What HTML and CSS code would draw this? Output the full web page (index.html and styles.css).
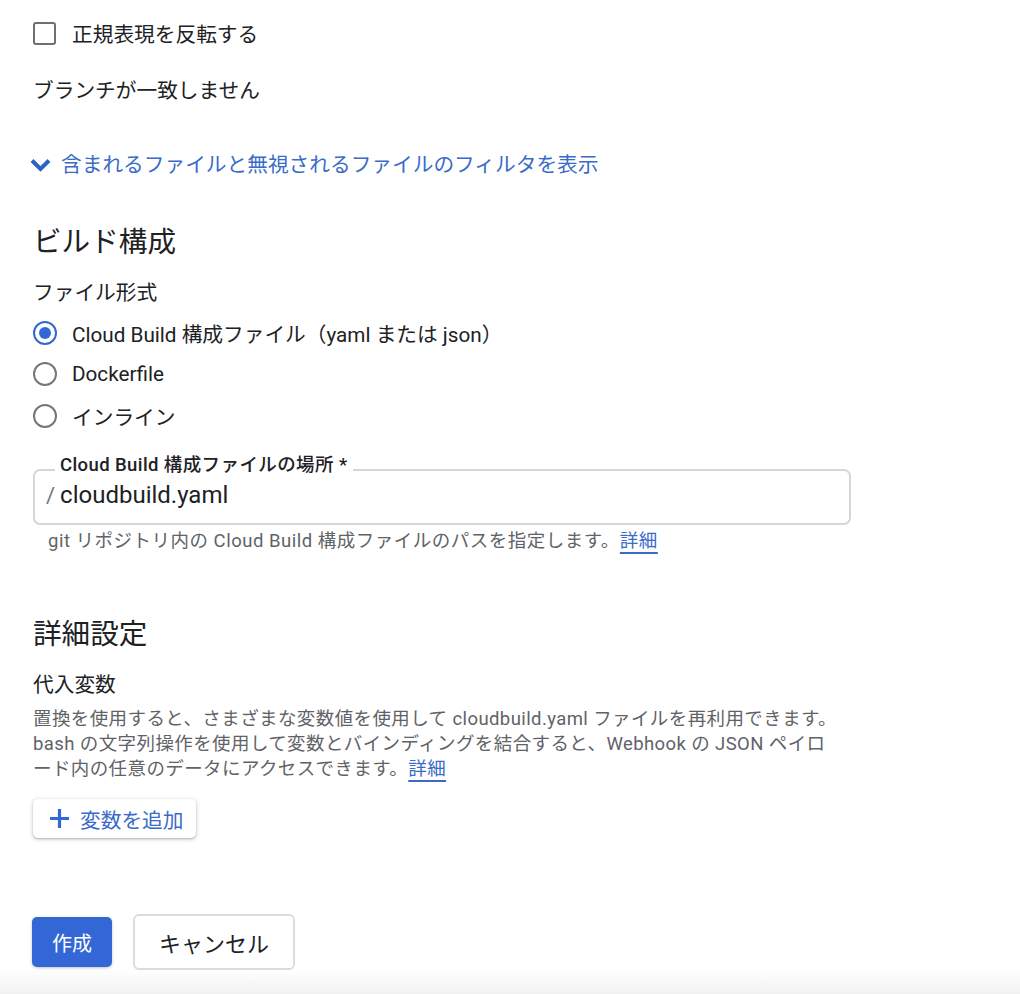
FILE: index.html
```html
<!DOCTYPE html>
<html lang="ja">
<head>
<meta charset="utf-8">
<title>トリガーの作成</title>
<link rel="stylesheet" href="styles.css">
</head>
<body>
<div class="form">
  <div class="check-row">
    <span class="checkbox"></span>
    <span>正規表現を反転する</span>
  </div>
  <div class="plain">ブランチが一致しません</div>
  <div class="expander">
    <svg class="chevron" width="21" height="14" viewBox="0 0 21 14"><polyline points="2,2.5 10.5,11 19,2.5" fill="none" stroke="#2f62c0" stroke-width="4"/></svg>
    <span>含まれるファイルと無視されるファイルのフィルタを表示</span>
  </div>

  <h2 class="section">ビルド構成</h2>
  <div class="field-title">ファイル形式</div>
  <div class="radios">
    <div class="radio-row"><span class="radio checked"></span><span>Cloud Build 構成ファイル（yaml または json）</span></div>
    <div class="radio-row"><span class="radio"></span><span>Dockerfile</span></div>
    <div class="radio-row"><span class="radio"></span><span>インライン</span></div>
  </div>

  <div class="outlined">
    <span class="float-label">Cloud Build 構成ファイルの場所 *</span>
    <span class="prefix">/</span>
    <span class="value">cloudbuild.yaml</span>
  </div>
  <div class="help">git リポジトリ内の Cloud Build 構成ファイルのパスを指定します。<a class="more" href="#">詳細</a></div>

  <h2 class="section section-adv">詳細設定</h2>
  <div class="subtitle">代入変数</div>
  <p class="desc">置換を使用すると、さまざまな変数値を使用して cloudbuild.yaml ファイルを再利用できます。bash の文字列操作を使用して変数とバインディングを結合すると、Webhook の JSON ペイロード内の任意のデータにアクセスできます。<a class="more" href="#">詳細</a></p>
  <button class="add-btn">
    <svg width="19" height="19" viewBox="0 0 19 19"><path d="M9.5 0v19M0 9.5h19" stroke="#3367d6" stroke-width="3.2"/></svg>
    <span>変数を追加</span>
  </button>

  <div class="actions">
    <button class="btn-primary">作成</button>
    <button class="btn-secondary">キャンセル</button>
  </div>
</div>
<div class="shade"></div>
</body>
</html>
```

FILE: styles.css
```css
html, body {
  margin: 0;
  padding: 0;
  background: #ffffff;
  overflow: hidden;
}
body {
  font-family: "Roboto", "Noto Sans CJK JP", sans-serif;
  font-size: 20.7px;
  color: #202124;
}
.form {
  padding: 11px 0 0 33px;
  width: 818px;
}
.check-row {
  display: flex;
  align-items: center;
  gap: 16px;
  height: 44px;
}
.checkbox {
  width: 23px;
  height: 23px;
  box-sizing: border-box;
  border: 2px solid #6f6f6f;
  border-radius: 3px;
}
.plain {
  margin-top: 21px;
  line-height: 30px;
}
.expander {
  margin-top: 44px;
  margin-left: -3px;
  display: flex;
  align-items: center;
  gap: 10px;
  line-height: 30px;
  color: #3a6bc9;
}
.section {
  margin: 42px 0 0;
  font-size: 28.6px;
  line-height: 40px;
  font-weight: 400;
}
.section-adv {
  margin-top: 62px;
}
.field-title {
  margin-top: 16px;
  line-height: 30px;
}
.subtitle {
  margin-top: 16px;
  line-height: 30px;
}
.radios {
  margin-top: 4px;
}
.radio-row {
  height: 41.5px;
  display: flex;
  align-items: center;
  gap: 15px;
}
.radio {
  width: 24px;
  height: 24px;
  box-sizing: border-box;
  border: 2px solid #767676;
  border-radius: 50%;
  display: flex;
  align-items: center;
  justify-content: center;
}
.radio.checked {
  border-color: #3367d6;
}
.radio.checked::after {
  content: "";
  width: 12px;
  height: 12px;
  border-radius: 50%;
  background: #3367d6;
}
.outlined {
  position: relative;
  margin-top: 32.5px;
  height: 56px;
  box-sizing: border-box;
  border: 2px solid #d6d6d6;
  border-radius: 7px;
  display: flex;
  align-items: center;
  padding: 0 0 4px 11px;
}
.float-label {
  position: absolute;
  top: -17px;
  left: 20px;
  padding: 0 5px;
  background: #ffffff;
  font-size: 18.5px;
  letter-spacing: 0.4px;
  font-weight: 500;
  line-height: 22px;
  color: #202124;
}
.prefix {
  color: #757575;
  font-size: 22px;
  margin-right: 5px;
}
.value {
  font-size: 24px;
}
.help {
  margin-top: 5px;
  padding-left: 15px;
  line-height: 22px;
  font-size: 18.5px;
  letter-spacing: 0.5px;
  color: #5f6368;
}
.more {
  color: #3a6bc9;
  text-decoration: underline;
  text-decoration-thickness: 2px;
  text-underline-offset: 5px;
}
.desc {
  margin: 6.5px 0 0;
  max-width: 810px;
  font-size: 18.5px;
  letter-spacing: 0.4px;
  line-height: 25px;
  color: #5f6368;
}
.add-btn {
  margin-top: 17.5px;
  height: 39px;
  width: 163px;
  display: flex;
  align-items: center;
  gap: 11px;
  padding: 0 0 0 17px;
  border: none;
  border-radius: 5px;
  background: #ffffff;
  box-shadow: 0 1px 2px rgba(60, 64, 67, 0.3), 0 1px 4px 1px rgba(60, 64, 67, 0.15);
  font-family: inherit;
  font-size: 20.7px;
  color: #3a6bc9;
}
.actions {
  margin-top: 76px;
  display: flex;
  align-items: center;
  gap: 21px;
  margin-left: -1px;
}
.btn-primary {
  width: 80px;
  height: 50px;
  border: none;
  border-radius: 5px;
  background: #3367d6;
  color: #ffffff;
  font-family: inherit;
  font-size: 20px;
  box-shadow: 0 1px 3px rgba(60, 64, 67, 0.3);
}
.btn-secondary {
  width: 162px;
  height: 56px;
  border: 2px solid #dcdcdc;
  border-radius: 6px;
  background: #ffffff;
  color: #202124;
  font-family: inherit;
  font-size: 22px;
}
.shade {
  height: 24px;
  background: linear-gradient(#ffffff, #f1f1f1);
}
```
